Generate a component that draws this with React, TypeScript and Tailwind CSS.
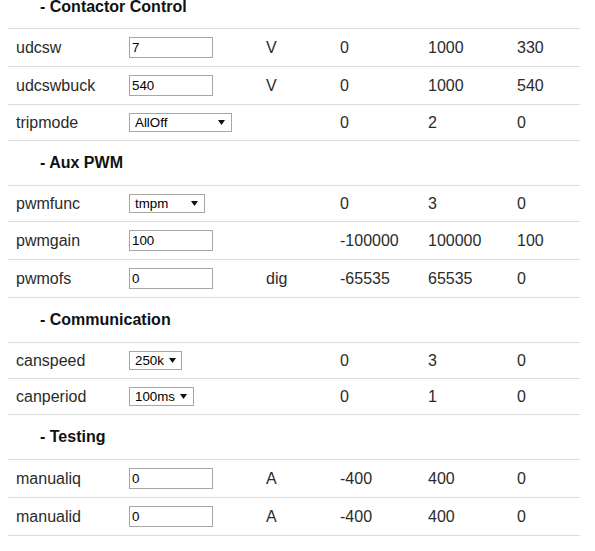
import React from "react";

type Row =
  | { kind: "head"; title: string }
  | {
      kind: "input" | "select";
      name: string;
      value: string;
      unit: string;
      min: string;
      max: string;
      def: string;
      selW?: string;
    };

const rows: Row[] = [
  { kind: "head", title: "- Contactor Control" },
  { kind: "input", name: "udcsw", value: "7", unit: "V", min: "0", max: "1000", def: "330" },
  { kind: "input", name: "udcswbuck", value: "540", unit: "V", min: "0", max: "1000", def: "540" },
  { kind: "select", name: "tripmode", value: "AllOff", unit: "", min: "0", max: "2", def: "0", selW: "w-[103px]" },
  { kind: "head", title: "- Aux PWM" },
  { kind: "select", name: "pwmfunc", value: "tmpm", unit: "", min: "0", max: "3", def: "0", selW: "w-[76px]" },
  { kind: "input", name: "pwmgain", value: "100", unit: "", min: "-100000", max: "100000", def: "100" },
  { kind: "input", name: "pwmofs", value: "0", unit: "dig", min: "-65535", max: "65535", def: "0" },
  { kind: "head", title: "- Communication" },
  { kind: "select", name: "canspeed", value: "250k", unit: "", min: "0", max: "3", def: "0", selW: "w-[53px]" },
  { kind: "select", name: "canperiod", value: "100ms", unit: "", min: "0", max: "1", def: "0", selW: "w-[65px]" },
  { kind: "head", title: "- Testing" },
  { kind: "input", name: "manualiq", value: "0", unit: "A", min: "-400", max: "400", def: "0" },
  { kind: "input", name: "manualid", value: "0", unit: "A", min: "-400", max: "400", def: "0" },
];

function Select({ value, w }: { value: string; w: string }) {
  return (
    <div
      className={`${w} h-[19px] border border-[#a6a6a6] bg-white flex items-center justify-between pl-[5px] pr-[6px] text-[13.33px] text-black leading-none`}
    >
      <span>{value}</span>
      <svg width="7" height="5" viewBox="0 0 7 5" className="ml-[5px] shrink-0">
        <polygon points="0,0 7,0 3.5,5" fill="#111" />
      </svg>
    </div>
  );
}

export default function App() {
  return (
    <div
      className="bg-white w-[595px] h-[551px] overflow-hidden"
      style={{ fontFamily: '"Liberation Sans", Arial, sans-serif' }}
    >
      <div className="mx-[8px] w-[572px] -mt-[15px] text-[16px] text-[#2b2b2b]">
        {rows.map((r, i) =>
          r.kind === "head" ? (
            <div
              key={i}
              className={`${i === 0 ? "h-[44px]" : "h-[45px]"} border-b border-[#dcdcdc] flex items-center pl-[32px] font-bold text-[#111]`}
            >
              {r.title}
            </div>
          ) : (
            <div
              key={i}
              className={`${r.kind === "input" ? "h-[38px]" : "h-[36px]"} border-b border-[#dcdcdc] grid grid-cols-[113px_137px_74px_88px_89px_71px] items-center`}
            >
              <div className="pl-[8px]">{r.name}</div>
              <div className="pl-[8px]">
                {r.kind === "input" ? (
                  <input
                    readOnly
                    value={r.value}
                    className="block w-[84px] h-[21px] border border-[#a6a6a6] bg-white pl-[2px] text-[13.33px] text-black outline-none"
                    style={{ fontFamily: '"Liberation Sans", Arial, sans-serif' }}
                  />
                ) : (
                  <Select value={r.value} w={r.selW || "w-[80px]"} />
                )}
              </div>
              <div className="pl-[8px]">{r.unit}</div>
              <div className="pl-[8px]">{r.min}</div>
              <div className="pl-[8px]">{r.max}</div>
              <div className="pl-[8px]">{r.def}</div>
            </div>
          )
        )}
      </div>
    </div>
  );
}
